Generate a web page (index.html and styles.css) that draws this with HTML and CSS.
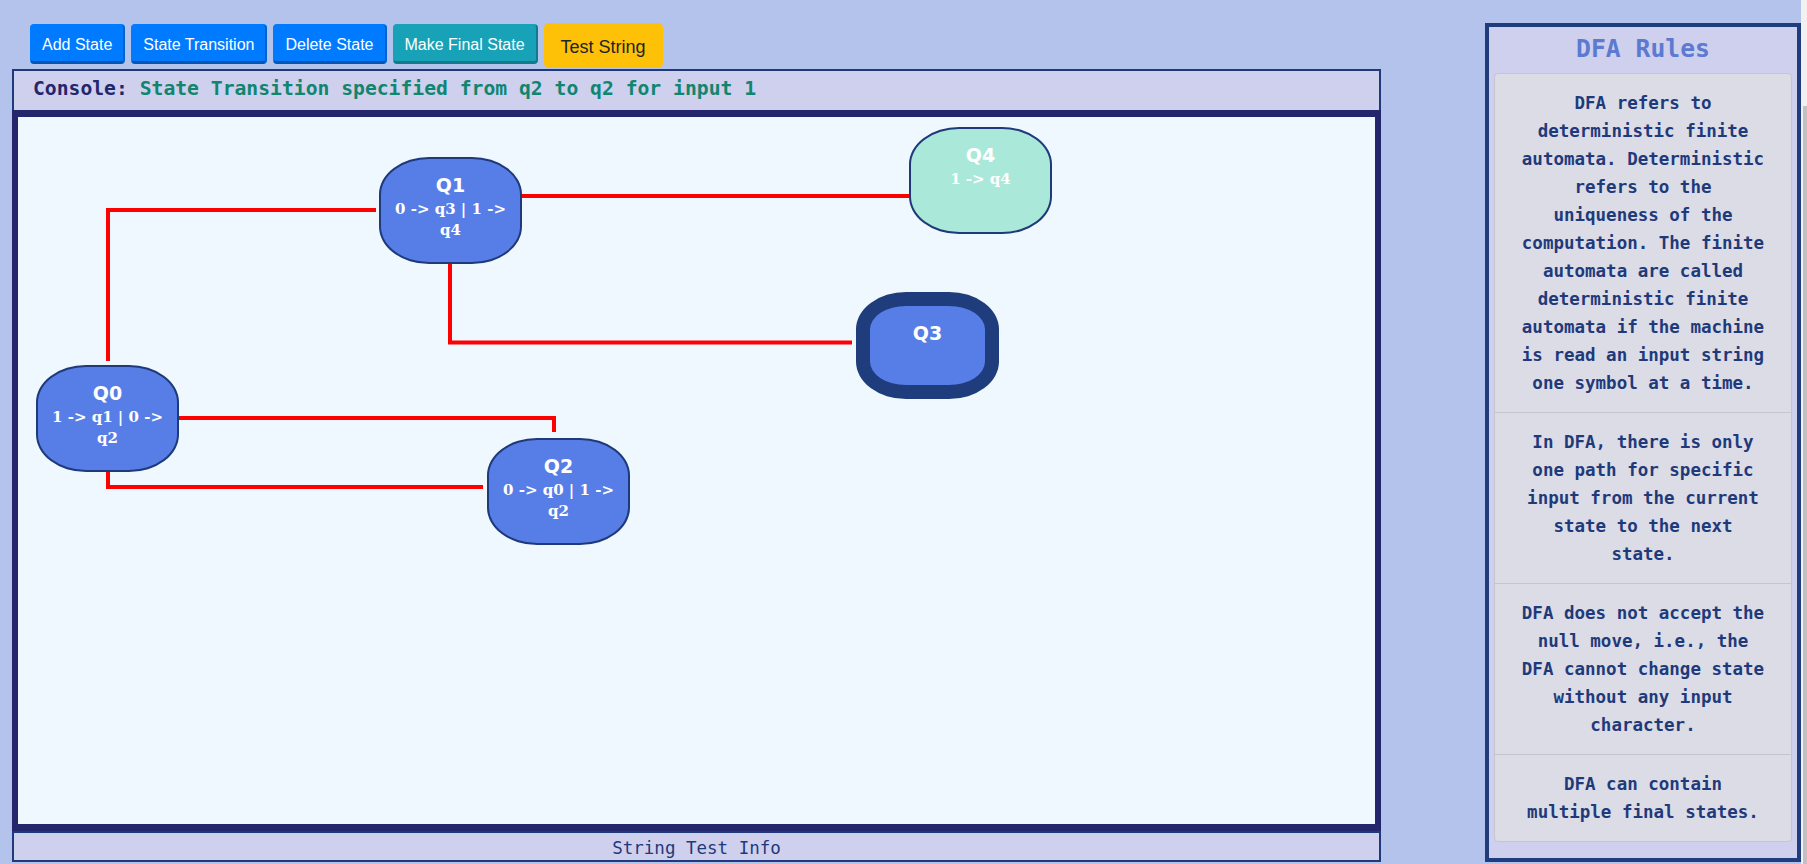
FILE: index.html
```html
<!DOCTYPE html>
<html lang="en">
<head>
  <meta charset="UTF-8" />
  <title>DFA Simulator</title>
  <link rel="stylesheet" href="styles.css">
</head>
<body>

  <div class="app">
    <main class="workspace">
      <div class="toolbar">
        <button class="btn btn-primary">Add State</button>
        <button class="btn btn-primary">State Transition</button>
        <button class="btn btn-primary">Delete State</button>
        <button class="btn btn-info">Make Final State</button>
        <button class="btn btn-warning">Test String</button>
      </div>

      <div class="console">
        <span class="console-label">Console:</span>
        <span class="console-msg">State Transition specified from q2 to q2 for input 1</span>
      </div>

      <div class="canvas">
        <svg class="wires" width="100%" height="100%">
          <path d="M 90 244 V 93 H 358" />
          <path d="M 432 147 V 225.5 H 834" />
          <path d="M 504 79 H 891" />
          <path d="M 161 301 H 536 V 315" />
          <path d="M 90 355 V 370 H 465" />
        </svg>

        <div class="state" style="left: 18px; top: 248px;">
          <h3>Q0</h3>
          <p>1 -&gt; q1 | 0 -&gt; q2</p>
        </div>
        <div class="state" style="left: 361px; top: 40px;">
          <h3>Q1</h3>
          <p>0 -&gt; q3 | 1 -&gt; q4</p>
        </div>
        <div class="state" style="left: 469px; top: 321px;">
          <h3>Q2</h3>
          <p>0 -&gt; q0 | 1 -&gt; q2</p>
        </div>
        <div class="state final" style="left: 838px; top: 175px;">
          <h3>Q3</h3>
        </div>
        <div class="state selected" style="left: 891px; top: 10px;">
          <h3>Q4</h3>
          <p>1 -&gt; q4</p>
        </div>
      </div>

      <div class="test-info">String Test Info</div>
    </main>

    <aside class="rules">
      <h2>DFA Rules</h2>
      <ul class="rule-list">
        <li>DFA refers to deterministic finite automata. Deterministic refers to the uniqueness of the computation. The finite automata are called deterministic finite automata if the machine is read an input string one symbol at a time.</li>
        <li>In DFA, there is only one path for specific input from the current state to the next state.</li>
        <li>DFA does not accept the null move, i.e., the DFA cannot change state without any input character.</li>
        <li>DFA can contain multiple final states.</li>
      </ul>
    </aside>

    <div class="scrollbar"><div class="thumb"></div></div>
  </div>

</body>
</html>
```

FILE: styles.css
```css
* { box-sizing: border-box; margin: 0; padding: 0; }

html, body { height: 100%; }

body {
  font-family: "Liberation Sans", Arial, sans-serif;
  background: #b3c3eb;
  overflow: hidden;
}

.app {
  display: flex;
  height: 100vh;
}

/* Zona de trabajo */
.workspace {
  width: 1369px;
  margin-left: 12px;
  padding-top: 24px;
  padding-bottom: 2px;
  display: flex;
  flex-direction: column;
}

.toolbar {
  display: flex;
  align-items: flex-start;
  gap: 6px;
  height: 45px;
  padding-left: 18px;
}

.btn {
  font-family: "Liberation Sans", Arial, sans-serif;
  font-size: 16px;
  line-height: 24px;
  color: white;
  border-style: solid;
  border-width: 1px 2px 3px 1px;
  border-radius: 4px;
  padding: 8px 11px 4px;
  cursor: pointer;
}

.btn-primary {
  background-color: #007bff;
  border-color: #007bff #0062cc #0056b3 #007bff;
}

.btn-info {
  background-color: #17a2b8;
  border-color: #17a2b8 #117a8b #117a8b #17a2b8;
}

.btn-warning {
  background-color: #ffc107;
  color: #212529;
  border: 1px solid #ffc107;
  border-radius: 5px;
  font-size: 18px;
  line-height: 27px;
  padding: 10px 16px 6px;
  margin-top: -1px;
}

.console {
  height: 41px;
  border: 2px solid #1f3a7a;
  border-bottom: none;
  background: #cfcfee;
  padding-left: 19px;
  font: bold 19.7px/36px "DejaVu Sans Mono", monospace;
  white-space: nowrap;
}

.console-label { color: #23266b; }
.console-msg { color: #10866f; }

.canvas {
  flex-grow: 1;
  position: relative;
  background: #f0f8ff;
  border: 7px solid #23266b;
  border-left-width: 6px;
  border-right-width: 6px;
}

.wires {
  position: absolute;
  top: 0;
  left: 0;
}

.wires path {
  fill: none;
  stroke: #ff0000;
  stroke-width: 4;
}

/* Estados */
.state {
  position: absolute;
  width: 143px;
  height: 107px;
  border: 2px solid #1f3a7a;
  border-radius: 35%;
  background: #577ee6;
  color: white;
  text-align: center;
  padding: 14px 8px 0;
}

.state h3 {
  font: bold 19px/24px "DejaVu Sans", Verdana, sans-serif;
}

.state p {
  font: bold 15px/21px "DejaVu Serif", serif;
  margin-top: 2px;
}

.state.final {
  border: 14px solid #1f3d7c;
  padding-top: 15px;
}

.state.selected { background: #aae9d9; }

.test-info {
  height: 31px;
  border: 2px solid #1f3a7a;
  background: #cfcfee;
  color: #1f3a7a;
  text-align: center;
  padding-top: 3px;
  font: 17.5px/24px "DejaVu Sans Mono", monospace;
}

/* Panel de reglas */
.rules {
  width: 316px;
  margin: 23px 0 2px 104px;
  border: 4px solid #1f3c7d;
  background: #cfcfee;
  padding: 0 5px;
}

.rules h2 {
  font: bold 24.7px/43px "DejaVu Sans Mono", monospace;
  color: #5b7ad0;
  text-align: center;
  margin-bottom: 3px;
}

.rule-list {
  list-style: none;
  background: #dcdce6;
  border: 1px solid #c5c5d0;
  border-radius: 4px;
}

.rule-list li {
  padding: 15px 23px;
  border-top: 1px solid #c5c5d0;
  font: bold 17.5px/28px "DejaVu Sans Mono", monospace;
  color: #1f3a7a;
  text-align: center;
}

.rule-list li:first-child { border-top: none; }

.scrollbar {
  width: 6px;
  background: #f1f1f1;
  padding: 106px 0 0 2px;
  display: flex;
}

.thumb {
  flex-grow: 1;
  background: #c1c1c1;
}
```
